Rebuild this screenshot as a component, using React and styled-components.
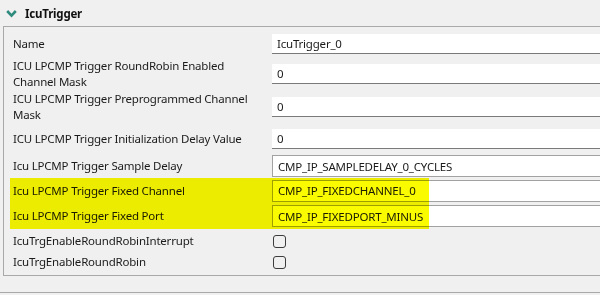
import React from "react";
import styled, { createGlobalStyle } from "styled-components";

const GlobalStyle = createGlobalStyle`
  body {
    margin: 0;
    background: #f0f0f0;
    font-family: "Noto Sans", "Open Sans", sans-serif;
    font-size: 11.5px;
    letter-spacing: -0.2px;
    color: #1b1b1b;
  }
`;

const Page = styled.div`
  width: 600px;
  height: 295px;
  overflow: hidden;
  background: #f0f0f0;
`;

const Header = styled.div`
  height: 26px;
  display: flex;
  align-items: center;
  gap: 8px;
  padding-left: 6px;
`;

const Title = styled.span`
  font-weight: 700;
  font-size: 11.5px;
  color: #101010;
`;

const Panel = styled.div`
  position: relative;
  margin-left: 3px;
  width: 620px;
  border: 1px solid #a9a9a9;
  padding: 3px 0 4px 9px;
`;

const Row = styled.div`
  display: grid;
  grid-template-columns: 259px 1fr;
  align-items: center;
  height: ${(p) => p.h}px;
`;

const Label = styled.div`
  line-height: 16px;
  white-space: nowrap;
`;

const Field = styled.div`
  height: ${(p) => (p.boxed ? 20 : 19)}px;
  display: flex;
  align-items: center;
  padding-left: 5px;
  background: #ffffff;
  border: ${(p) => (p.boxed ? "1px solid #a2a2a2" : "none")};
  border-bottom: 1px solid ${(p) => (p.boxed ? "#a2a2a2" : "#7a7a7a")};
  white-space: nowrap;
`;

const Check = styled.span`
  display: block;
  width: 11px;
  height: 11px;
  border: 1px solid #3c3c3c;
  border-radius: 3px;
  margin-left: 1px;
`;

const Highlight = styled.div`
  position: absolute;
  left: 6px;
  top: 151px;
  width: 419px;
  height: 51px;
  background: #fbfb00;
  mix-blend-mode: multiply;
  pointer-events: none;
`;

const Footer = styled.div`
  height: 16px;
  border-bottom: 1px solid #a9a9a9;
`;

const Chevron = () => (
  <svg width="11" height="9" viewBox="0 0 11 9">
    <polyline
      points="1.2,2 5.5,6.6 9.8,2"
      fill="none"
      stroke="#2e8b7e"
      strokeWidth="2.6"
    />
  </svg>
);

const rows = [
  { h: 27, label: ["Name"], value: "IcuTrigger_0" },
  { h: 33, label: ["ICU LPCMP Trigger RoundRobin Enabled", "Channel Mask"], value: "0" },
  { h: 34, label: ["ICU LPCMP Trigger Preprogrammed Channel", "Mask"], value: "0" },
  { h: 30, label: ["ICU LPCMP Trigger Initialization Delay Value"], value: "0" },
  { h: 24, label: ["Icu LPCMP Trigger Sample Delay"], value: "CMP_IP_SAMPLEDELAY_0_CYCLES", boxed: true },
  { h: 25, label: ["Icu LPCMP Trigger Fixed Channel"], value: "CMP_IP_FIXEDCHANNEL_0", boxed: true },
  { h: 26, label: ["Icu LPCMP Trigger Fixed Port"], value: "CMP_IP_FIXEDPORT_MINUS", boxed: true },
  { h: 24, label: ["IcuTrgEnableRoundRobinInterrupt"], check: true },
  { h: 18, label: ["IcuTrgEnableRoundRobin"], check: true },
];

const App = () => (
  <Page>
    <GlobalStyle />
    <Header>
      <Chevron />
      <Title>IcuTrigger</Title>
    </Header>
    <Panel>
      {rows.map((r, i) => (
        <Row key={i} h={r.h}>
          <Label>
            {r.label.map((l, j) => (
              <div key={j}>{l}</div>
            ))}
          </Label>
          {r.check ? <Check /> : <Field boxed={r.boxed}>{r.value}</Field>}
        </Row>
      ))}
      <Highlight />
    </Panel>
    <Footer />
  </Page>
);

export default App;
